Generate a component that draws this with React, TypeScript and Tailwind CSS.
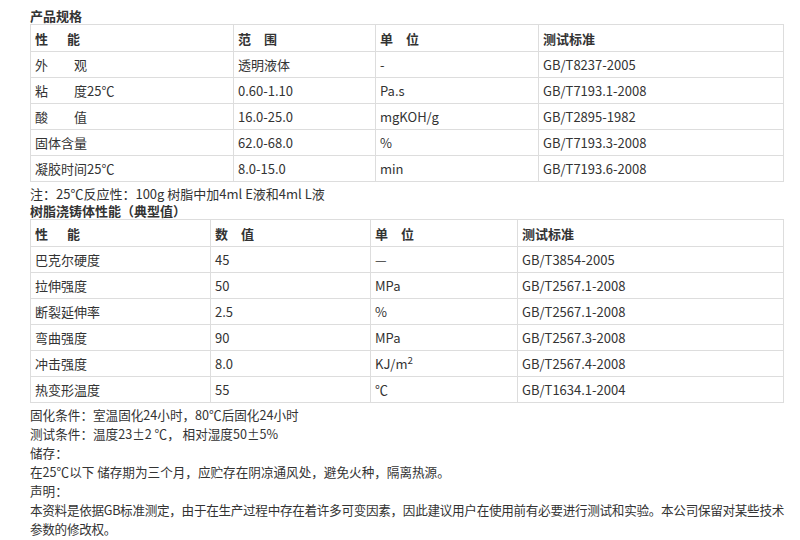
import React from "react";

const spec = [
  ["外　　观", "透明液体", "-", "GB/T8237-2005"],
  ["粘　　度25℃", "0.60-1.10", "Pa.s", "GB/T7193.1-2008"],
  ["酸　　值", "16.0-25.0", "mgKOH/g", "GB/T2895-1982"],
  ["固体含量", "62.0-68.0", "%", "GB/T7193.3-2008"],
  ["凝胶时间25℃", "8.0-15.0", "min", "GB/T7193.6-2008"],
];

const cast: [string, string, React.ReactNode, string][] = [
  ["巴克尔硬度", "45", "—", "GB/T3854-2005"],
  ["拉伸强度", "50", "MPa", "GB/T2567.1-2008"],
  ["断裂延伸率", "2.5", "%", "GB/T2567.1-2008"],
  ["弯曲强度", "90", "MPa", "GB/T2567.3-2008"],
  ["冲击强度", "8.0", <>KJ/m<sup>2</sup></>, "GB/T2567.4-2008"],
  ["热变形温度", "55", "℃", "GB/T1634.1-2004"],
];

function Table({ head, rows, widths }: { head: string[]; rows: React.ReactNode[][]; widths: string[] }) {
  return (
    <table className="w-[753px] border-collapse table-fixed">
      <colgroup>
        {widths.map((w, i) => (
          <col key={i} style={{ width: w }} />
        ))}
      </colgroup>
      <tbody>
        <tr className="h-[27px]">
          {head.map((h, i) => (
            <td key={i} className="border border-[#ddd] px-[4px] font-bold whitespace-pre">{h}</td>
          ))}
        </tr>
        {rows.map((r, i) => (
          <tr key={i} className="h-[26px]">
            {r.map((c, j) => (
              <td key={j} className="border border-[#ddd] px-[4px] whitespace-pre">{c}</td>
            ))}
          </tr>
        ))}
      </tbody>
    </table>
  );
}

export default function App() {
  return (
    <div className="w-[800px] h-[540px] bg-white text-[#333] text-[13px] leading-[17px] pl-[30px] pt-[7px] overflow-hidden" style={{ fontFamily: '"Noto Sans CJK SC", "Open Sans", sans-serif' }}>
      <div className="font-bold">产品规格</div>
      <Table head={["性　  能", "范　围", "单　位", "测试标准"]} rows={spec} widths={["203px", "142px", "163px", "245px"]} />
      <div className="mt-[3px]">注：25℃反应性：100g 树脂中加4ml E液和4ml L液</div>
      <div className="font-bold">树脂浇铸体性能（典型值）</div>
      <Table head={["性　  能", "数　值", "单　位", "测试标准"]} rows={cast} widths={["180px", "160px", "147px", "266px"]} />
      <div className="mt-[2px] leading-[19px] text-[12.6px] w-[755px]">
        <div>固化条件：室温固化24小时，80℃后固化24小时</div>
        <div>测试条件：温度23±2 ℃， 相对湿度50±5%</div>
        <div>储存：</div>
        <div>在25℃以下 储存期为三个月，应贮存在阴凉通风处，避免火种，隔离热源。</div>
        <div>声明：</div>
        <div className="tracking-[-0.3px]">本资料是依据GB标准测定，由于在生产过程中存在着许多可变因素，因此建议用户在使用前有必要进行测试和实验。本公司保留对某些技术参数的修改权。</div>
      </div>
    </div>
  );
}
